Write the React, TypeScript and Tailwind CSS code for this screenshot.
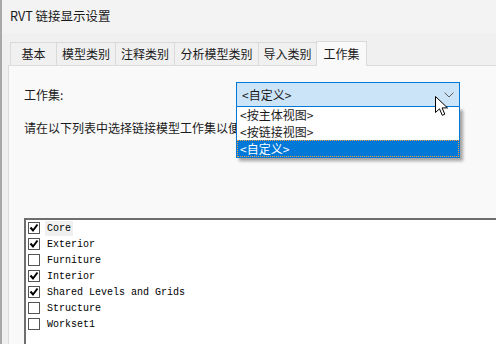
import React from 'react';

const cjk = { fontFamily: '"Noto Sans CJK SC", "Noto Sans", sans-serif' };
const mono = { fontFamily: '"Liberation Mono", "DejaVu Sans Mono", monospace' };

const tabs = [
  { label: '基本', w: 'w-[47px]' },
  { label: '模型类别', w: 'w-[60px]' },
  { label: '注释类别', w: 'w-[60px]' },
  { label: '分析模型类别', w: 'w-[85px]' },
  { label: '导入类别', w: 'w-[59px]' },
];

const worksets = [
  { name: 'Core', checked: true, focus: true },
  { name: 'Exterior', checked: true },
  { name: 'Furniture', checked: false },
  { name: 'Interior', checked: true },
  { name: 'Shared Levels and Grids', checked: true },
  { name: 'Structure', checked: false },
  { name: 'Workset1', checked: false },
];

function CheckBox({ checked }: { checked: boolean }) {
  return (
    <svg width="12" height="12" viewBox="0 0 12 12" className="shrink-0">
      <rect x="0.5" y="0.5" width="11" height="11" fill="#fff" stroke="#555" />
      {checked && <path d="M2.5 5.5 L5 8.5 L9.5 2.5" fill="none" stroke="#000" strokeWidth="2" />}
    </svg>
  );
}

function Cursor() {
  return (
    <svg width="14" height="21" viewBox="0 0 14 21" className="absolute left-[199px] top-[14px]">
      <path d="M0.5 0.5 L0.5 16.5 L4.5 12.8 L7.3 19.3 L9.8 18.2 L7.1 11.9 L12.5 11.9 Z" fill="#fff" stroke="#000" strokeWidth="1" strokeLinejoin="round" />
    </svg>
  );
}

export default function App() {
  return (
    <div className="w-[496px] h-[344px] overflow-hidden bg-[#f0f0f0] border-l-2 border-[#a8a8a8] text-[12px] text-[#1a1a1a]" style={cjk}>
      <div className="h-[33px] flex items-center pl-[8px] bg-[#f3f3f3] text-[12.5px]">RVT 链接显示设置</div>

      <div className="flex items-end pl-[8px] h-[32px]">
        {tabs.map((t) => (
          <div key={t.label} className={`${t.w} h-[23px] shrink-0 flex items-center justify-center border border-b-0 border-[#dadada] -ml-px first:ml-0 bg-[#f0f0f0]`}>
            {t.label}
          </div>
        ))}
        <div className="w-[51px] h-[25px] shrink-0 flex items-center justify-center border border-b-0 border-[#dadada] -ml-px bg-[#f9f9f9] relative top-px z-10">
          工作集
        </div>
      </div>

      <div className="ml-[6px] w-[600px] h-[400px] bg-[#f9f9f9] border-l border-t border-[#dcdcdc] pl-[15px]">
        <div className="flex items-center mt-[16px]">
          <div className="w-[212px]">工作集:</div>
          <div className="relative w-[224px] h-[25px] z-20">
            <div className="h-full bg-[#cce4f7] border border-[#0078d7] flex items-center pl-[5px]">
              <span>&lt;自定义&gt;</span>
              <svg width="10" height="6" viewBox="0 0 10 6" className="absolute right-[6px] top-[10px]">
                <path d="M0.5 0.5 L5 5 L9.5 0.5" fill="none" stroke="#606060" strokeWidth="1" />
              </svg>
            </div>
            <div className="absolute left-0 top-full w-full bg-white border border-t-0 border-[#0078d7] shadow-[3px_3px_3px_rgba(0,0,0,0.35)]">
              <div className="h-[16px] flex items-center pl-[3px]">&lt;按主体视图&gt;</div>
              <div className="h-[17px] flex items-center pl-[3px]">&lt;按链接视图&gt;</div>
              <div className="h-[17px] flex items-center pl-[3px] bg-[#0078d7] text-white outline-1 outline-dotted outline-[#f0a040] -outline-offset-1">&lt;自定义&gt;</div>
            </div>
            <Cursor />
          </div>
        </div>

        <div className="mt-[13px] w-[212px] overflow-hidden leading-[16px] whitespace-nowrap">请在以下列表中选择链接模型工作集以便在视图中显示:</div>

        <div className="mt-[82px] w-[560px] h-[200px] bg-white border-t-2 border-l-2 border-[#6e6e6e] pl-[2px] text-[10px] text-black" style={mono}>
          {worksets.map((w) => (
            <div key={w.name} className="h-[16px] flex items-center">
              <CheckBox checked={w.checked} />
              <span className={`ml-[5px] px-[2px] leading-[15px] ${w.focus ? 'bg-[#f0f0f0]' : ''}`}>{w.name}</span>
            </div>
          ))}
        </div>
      </div>
    </div>
  );
}
